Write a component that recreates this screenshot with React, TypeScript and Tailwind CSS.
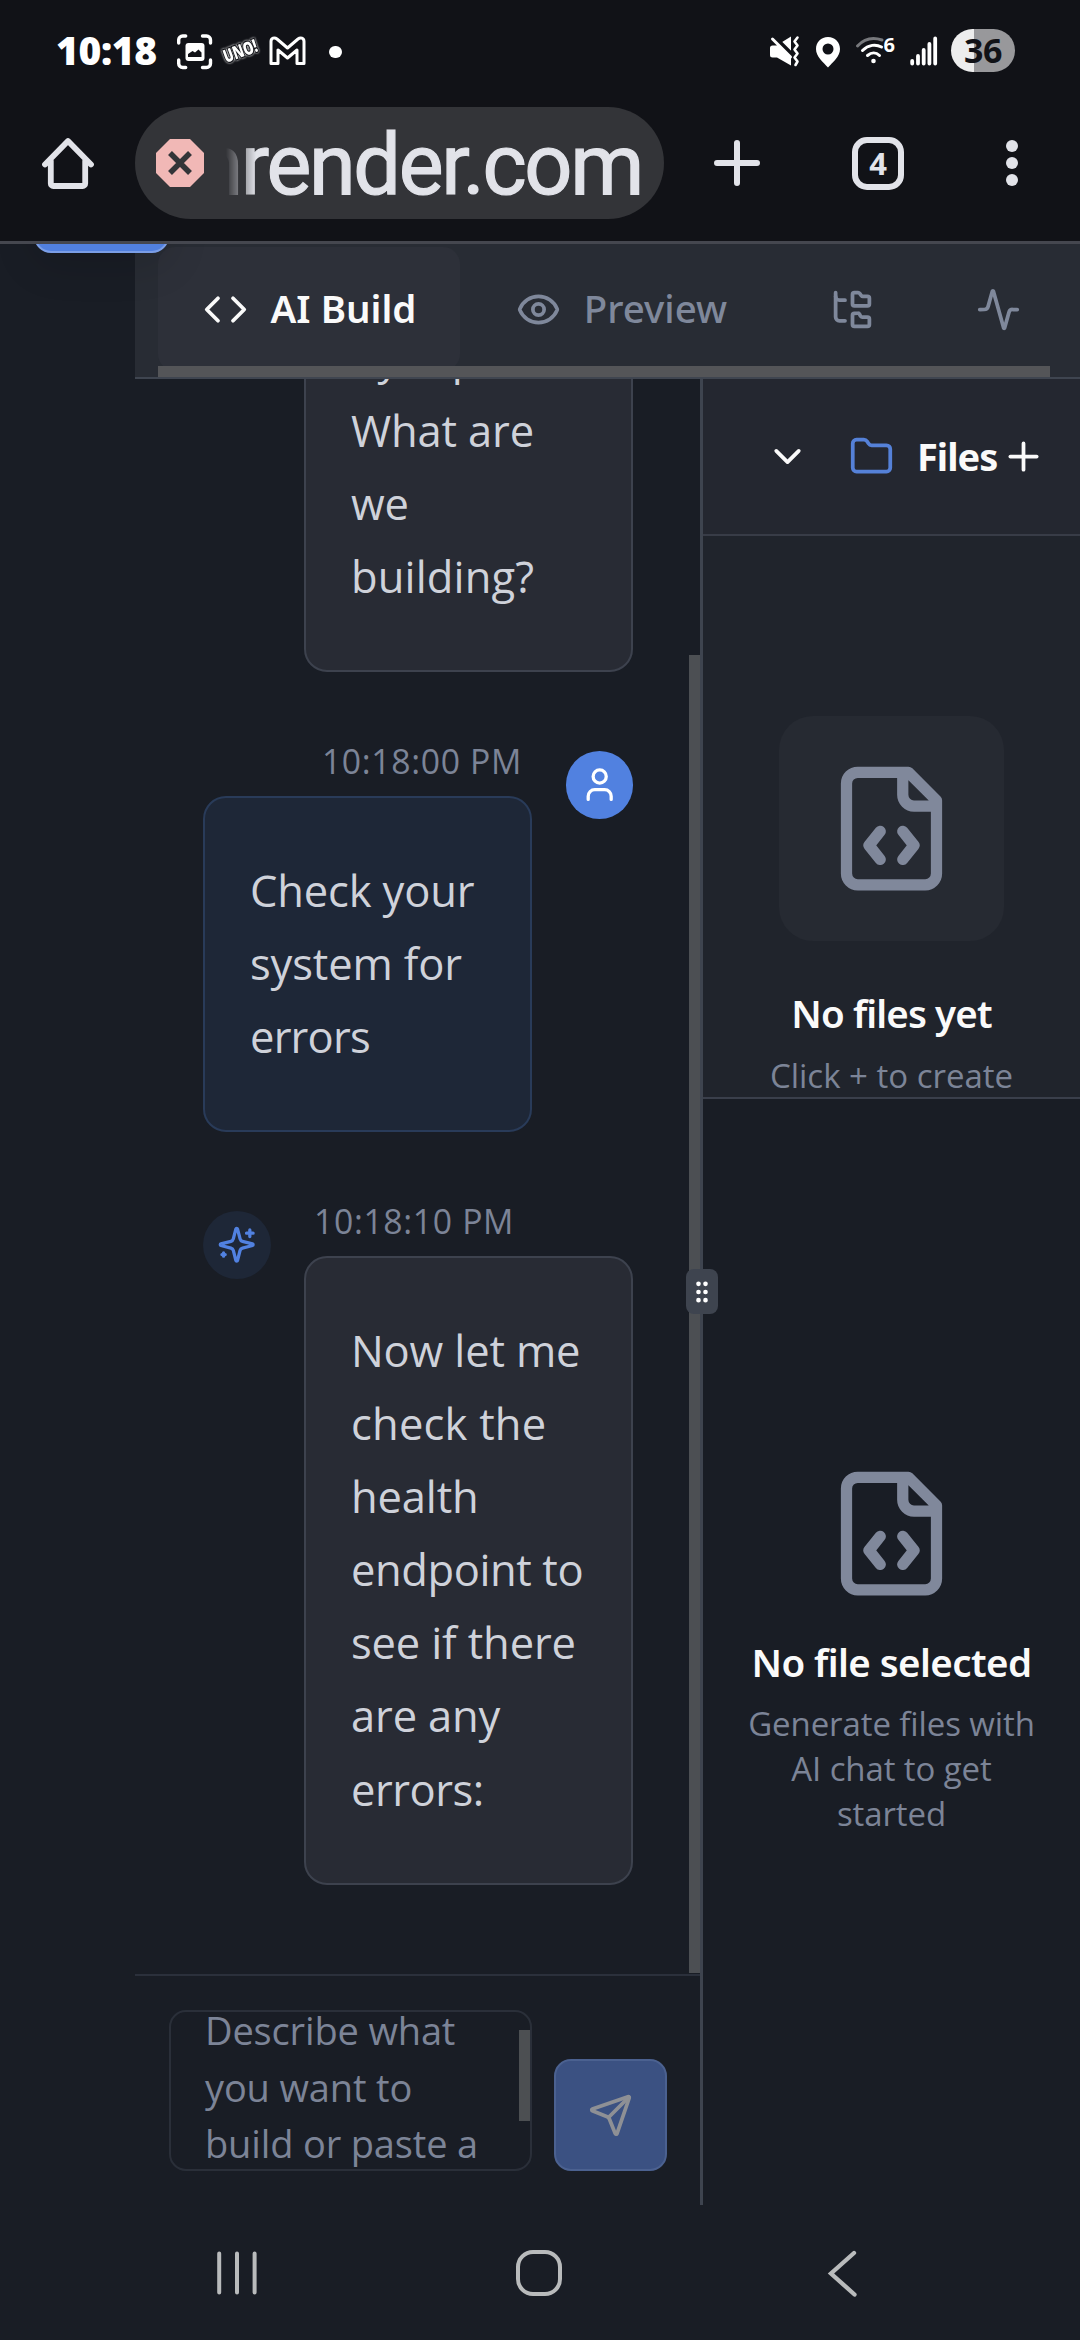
import type { ReactNode } from "react";
import { Activity, ChevronDown, Code, Eye, Folder, FolderTree, GripVertical, Plus, Send, User } from "lucide-react";

function StatusBar() {
  return (
    <div className="flex h-[100px] shrink-0 items-center pl-[56px] pr-[65px] text-white">
      <span className="w-[106px] whitespace-nowrap font-['Noto_Sans',sans-serif] text-[39px] font-black leading-[50px] tracking-[-0.4px]">10:18</span>
      <div className="ml-[14px] flex items-center">
        <svg className="mt-[3px] h-[37px] w-[37px]" viewBox="0 0 37 37" fill="none">
          <g stroke="#fff" strokeWidth="3.4" strokeLinecap="round">
            <path d="M2.7 10V7a4 4 0 0 1 4-4h3M26.5 3h4a4 4 0 0 1 4 4v3M34.500 27v3.500a4 4 0 0 1-4 4h-4M9.700 34.500h-3a4 4 0 0 1-4-4V27" />
          </g>
          <rect x="9.500" y="10" width="19" height="18" rx="3" fill="#fff" />
          <path d="M12 24v-3l4.500-3 2.500 1.500 3.500-3 3 3V24z" fill="#111217" />
        </svg>
        <svg className="ml-[9px] h-[34px] w-[38px] overflow-visible drop-shadow-[0_0_1px_#fff]" viewBox="0 0 38 34">
          <text x="4" y="30" transform="rotate(-20 4 30)" textLength="35" lengthAdjust="spacingAndGlyphs" className="font-['Open_Sans',sans-serif] text-[18px] font-extrabold" fill="#fff" stroke="#111217" strokeWidth="2.500" paintOrder="stroke">UNO!</text>
        </svg>
        <svg className="ml-[9px] mt-[2px] h-[30px] w-[37px]" viewBox="0 0 37 30" fill="none" stroke="#fff" strokeWidth="3" strokeLinejoin="round">
          <path d="M2 27V5.500C2 2 5.500 1 8 3l10.500 9L29 3c2.500-2 6-1 6 2.500V27.500h-7V14l-9.500 8L9 14v13.500H2z" />
        </svg>
        <span className="ml-[23px] mt-[4px] size-[12.500px] rounded-full bg-white" />
      </div>
      <div className="ml-auto flex items-center">
        <svg className="mt-[2px] h-[32px] w-[32px]" viewBox="0 0 32 32" fill="none">
          <path d="M3.500 10.500h4L22 1.500v29L8 22.500H3.500A2.500 2.500 0 0 1 1 20v-7a2.500 2.500 0 0 1 2.500-2.500z" fill="#fff" />
          <path d="M3.500 0L26 22.500" stroke="#111217" strokeWidth="4" />
          <path d="M3.500 4L21.500 22" stroke="#fff" strokeWidth="3" strokeLinecap="round" />
          <path d="M28.500 2.500l-3 4 3 4-3 4 3 4-3 4 3 4-2 3.500" stroke="#fff" strokeWidth="2.600" strokeLinecap="round" strokeLinejoin="round" />
        </svg>
        <svg className="ml-[14px] mt-[3px] h-[32px] w-[26px]" viewBox="0 0 26 32">
          <path fillRule="evenodd" fill="#fff" d="M13 1C6 1 1 6 1 13c0 7.500 7 13 12 18.500C18 26 25 20.500 25 13 25 6 20 1 13 1zm0 6.500a5.500 5.500 0 1 1 0 11 5.500 5.500 0 0 1 0-11z" />
        </svg>
        <svg className="ml-[15px] h-[30px] w-[38px] overflow-visible" viewBox="0 0 38 30" fill="none" strokeLinecap="round" strokeWidth="3">
          <path d="M1.500 11C8 4 17 2 26 5" stroke="#77787c" />
          <path d="M6.500 15.500C12.500 9.500 20 9 25.500 12" stroke="#fff" />
          <path d="M11.500 20.500c4-3.500 8.500-3.500 12 0" stroke="#fff" />
          <circle cx="17.500" cy="26" r="2.300" fill="#fff" />
          <text x="27.500" y="16.500" className="font-['Noto_Sans',sans-serif] text-[20px] font-bold" fill="#fff">6</text>
        </svg>
        <svg className="ml-[16px] mt-[3px] h-[31px] w-[28px]" viewBox="0 0 28 31" stroke="#fff" strokeWidth="3.800" strokeLinecap="round">
          <path d="M2.200 25v2.500M8 20v7.500M13.700 14v13.500M19.400 8v19.500M25.200 2.500v25" />
        </svg>
        <span className="ml-[13px] flex h-[43px] w-[64px] items-center justify-center rounded-full bg-linear-to-r from-[#ededed] from-36% to-[#98989b] to-36% font-['Noto_Sans',sans-serif] text-[34px] font-bold leading-[43px] tracking-[-0.5px] text-[#111217]">36</span>
      </div>
    </div>
  );
}

function BrowserToolbar() {
  return (
    <div className="flex h-[126px] shrink-0 items-center">
      <svg className="ml-[42px] h-[54px] w-[52px]" viewBox="0 0 52 54" fill="none" stroke="#e2e3e9" strokeWidth="5.800" strokeLinejoin="round" strokeLinecap="round">
        <path d="M3 28.500L26 5l23 23.500M8.800 25v22.500a2.500 2.500 0 0 0 2.500 2.500h29.400a2.500 2.500 0 0 0 2.500-2.500V25" />
      </svg>
      <div className="ml-[41px] flex h-[112px] w-[529px] items-center rounded-full bg-[#333438]">
        <svg className="ml-[21px] size-[48px]" viewBox="0 0 48 48">
          <path d="M14 0h20l14 14v20L34 48H14L0 34V14z" fill="#f1b8b6" />
          <path d="M14 14l20 20M34 14L14 34" stroke="#333438" strokeWidth="5.500" />
        </svg>
        <div className="ml-[22px] flex h-[112px] w-[416px] justify-end overflow-hidden [mask-image:linear-gradient(90deg,transparent,black_30px)]">
          <span className="mt-[3px] whitespace-nowrap font-['Roboto',sans-serif] text-[84.500px] font-normal leading-[112px] tracking-[-2.300px] text-[#e2e3e9] [-webkit-text-stroke:1.2px_#e2e3e9]">nrender.com</span>
        </div>
      </div>
      <svg className="ml-[50px] size-[46px]" viewBox="0 0 46 46" stroke="#e2e3e9" strokeWidth="6" strokeLinecap="round">
        <path d="M23 3v40M3 23h40" />
      </svg>
      <span className="ml-[92px] flex h-[53px] w-[52px] items-center justify-center rounded-[15px] border-6 border-[#e2e3e9] font-['Noto_Sans',sans-serif] text-[31px] font-bold leading-none text-[#e2e3e9]">4</span>
      <div className="ml-[102px] flex flex-col gap-[5px]">
        <span className="size-[12px] rounded-full bg-[#e2e3e9]" />
        <span className="size-[12px] rounded-full bg-[#e2e3e9]" />
        <span className="size-[12px] rounded-full bg-[#e2e3e9]" />
      </div>
    </div>
  );
}

function TabBar() {
  return (
    <div className="relative h-[135px] shrink-0 overflow-hidden border-b-2 border-[#3f4550] bg-[#282c34] pl-[23px] pt-[3px]">
      <div className="flex h-[124px] gap-[11.250px] font-['Noto_Sans',sans-serif] text-[38.500px] font-[560]">
        <div className="flex w-[302px] shrink-0 items-center gap-[22.500px] rounded-[17px] bg-[#2d3039] px-[45px] text-[#fafafa]">
          <Code size={45} className="shrink-0" />
          <span className="whitespace-nowrap">AI Build</span>
        </div>
        <div className="flex w-[302px] shrink-0 items-center gap-[22.500px] px-[45px] text-[#7f889b]">
          <Eye size={45} className="shrink-0" />
          <span className="whitespace-nowrap font-medium">Preview</span>
        </div>
        <div className="flex shrink-0 items-center px-[45px] text-[#7f889b]">
          <FolderTree size={45} />
        </div>
        <div className="flex shrink-0 items-center px-[45px] text-[#7f889b]">
          <Activity size={45} />
        </div>
      </div>
      <div className="absolute bottom-0 left-[23px] h-[11px] w-[892px] bg-[#545558]" />
    </div>
  );
}

function Bubble({ tone, children }: { tone: "user" | "ai"; children: ReactNode }) {
  const color = tone === "user" ? "border-[#293b59] bg-[#1e2737]" : "border-[#3d424e] bg-[#282b34]";
  return (
    <div className={`w-[329px] rounded-[23px] border-2 px-[45px] pb-[57px] pt-[55.600px] text-[43.500px] leading-[73.125px] tracking-[-0.150px] whitespace-nowrap text-[#cfd2da] ${color}`}>
      {children}
    </div>
  );
}

function SparklesIcon() {
  return (
    <svg className="size-[39.400px]" viewBox="0 0 24 24" fill="none" stroke="#5181e0" strokeWidth="2" strokeLinecap="round" strokeLinejoin="round">
      <path d="M9.937 15.500A2 2 0 0 0 8.500 14.063l-6.135-1.582a.5.5 0 0 1 0-.962L8.500 9.936A2 2 0 0 0 9.937 8.500l1.582-6.135a.5.5 0 0 1 .963 0L14.063 8.500A2 2 0 0 0 15.500 9.937l6.135 1.581a.5.5 0 0 1 0 .964L15.500 14.063a2 2 0 0 0-1.437 1.437l-1.582 6.135a.5.5 0 0 1-.963 0z" />
      <path d="M20 3v4M22 5h-4M4 17v2M5 18H3" />
    </svg>
  );
}

function Chat() {
  return (
    <div className="relative flex w-[565px] shrink-0 flex-col">
      <div className="relative flex h-[1595px] shrink-0 flex-col justify-end gap-[66px] overflow-hidden pb-[89.300px] pl-[68px] pr-[67px]">
        <div className="flex shrink-0 justify-end">
          <Bubble tone="ai">
            <div>by top…</div>
            <div>What are</div>
            <div>we</div>
            <div className="tracking-[0.150px]">building?</div>
          </Bubble>
        </div>
        <div className="flex shrink-0 gap-[33.500px]">
          <div className="flex flex-col gap-[12px]">
            <span className="pr-[10px] pt-px text-right text-[33.750px] leading-[45px] tracking-[0.650px] text-[#7c8497]">10:18:00 PM</span>
            <Bubble tone="user">
              <div>Check your</div>
              <div>system for</div>
              <div className="tracking-[-0.800px]">errors</div>
            </Bubble>
          </div>
          <span className="mt-[13px] flex size-[67.500px] items-center justify-center rounded-full bg-[#5181e0] text-white">
            <User size={39.4} />
          </span>
        </div>
        <div className="flex shrink-0 gap-[33.500px]">
          <span className="mt-[13px] flex size-[67.500px] items-center justify-center rounded-full bg-[#1e2737]">
            <SparklesIcon />
          </span>
          <div className="flex flex-col gap-[12px]">
            <span className="pl-[10px] pt-px text-[33.750px] leading-[45px] tracking-[0.650px] text-[#7c8497]">10:18:10 PM</span>
            <Bubble tone="ai">
              <div>Now let me</div>
              <div className="tracking-[0.200px]">check the</div>
              <div>health</div>
              <div className="tracking-[-0.400px]">endpoint to</div>
              <div>see if there</div>
              <div>are any</div>
              <div className="tracking-[-0.500px]">errors:</div>
            </Bubble>
          </div>
        </div>
        <div className="absolute bottom-px right-0 h-[1318px] w-[11px] bg-[#4c4f53]" />
      </div>
      <div className="flex h-[231px] shrink-0 items-end gap-[22px] border-t-2 border-[#2b303b] pb-[34px] pl-[34px] pr-[33px]">
        <div className="relative h-[161px] w-[363px] overflow-hidden rounded-[17px] border-2 border-[#2a2f39] pl-[34px] text-[38px] leading-[56.500px] tracking-[-0.150px] text-[#7c8497]">
          <div className="-mt-[10px] whitespace-nowrap">
            <div>Describe what</div>
            <div>you want to</div>
            <div>build or paste a</div>
          </div>
          <div className="absolute right-0 top-[18px] h-[91px] w-[11px] bg-[#4c4f52]" />
        </div>
        <div className="flex h-[112px] w-[113px] items-center justify-center rounded-[17px] border-2 border-[#4b6190] bg-[#3b5182] text-[#8e9095]">
          <Send size={45} />
        </div>
      </div>
    </div>
  );
}

function FileCodeIcon() {
  return (
    <svg className="size-[135px]" viewBox="0 0 24 24" fill="none" stroke="#80889b" strokeWidth="2" strokeLinecap="round" strokeLinejoin="round">
      <path d="M10 12.500 8 15l2 2.500M14 12.500l2 2.500-2 2.500M14 2v4a2 2 0 0 0 2 2h4M15 2H6a2 2 0 0 0-2 2v16a2 2 0 0 0 2 2h12a2 2 0 0 0 2-2V7z" />
    </svg>
  );
}

function FilesPanel() {
  return (
    <div className="flex w-[377px] shrink-0 flex-col">
      <div className="flex h-[157px] shrink-0 items-center border-b-2 border-[#383c47] bg-[#242730] pl-[62px] text-[#fafafa]">
        <ChevronDown size={45} className="shrink-0" />
        <Folder size={45} className="ml-[39px] shrink-0 text-[#5581d8]" />
        <span className="ml-[23px] w-[82px] shrink-0 font-['Noto_Sans',sans-serif] text-[38px] font-bold tracking-[-1px]">Files</span>
        <Plus size={45} className="ml-[2px] shrink-0" />
      </div>
      <div className="flex h-[563px] shrink-0 flex-col items-center overflow-hidden border-b-2 border-[#3a3f4b] bg-[#20242c] pt-[180px] text-center">
        <div className="flex size-[225px] shrink-0 items-center justify-center rounded-[34px] bg-[#262a32]">
          <FileCodeIcon />
        </div>
        <div className="mt-[44px] font-['Noto_Sans',sans-serif] text-[38.500px] font-[560] leading-[56px] tracking-[-0.900px] text-[#fafafa]">No files yet</div>
        <div className="mt-[12px] text-[33px] leading-[45px] text-[#7c8497]">Click + to create</div>
      </div>
      <div className="flex grow flex-col items-center pt-[367px] text-center">
        <FileCodeIcon />
        <div className="mt-[33px] font-['Noto_Sans',sans-serif] text-[38.500px] font-[560] leading-[56px] tracking-[-0.600px] text-[#fafafa]">No file selected</div>
        <div className="mt-[11px] text-[33px] leading-[45px] tracking-[-0.100px] text-[#7c8497]">
          Generate files with
          <br />
          AI chat to get
          <br />
          started
        </div>
      </div>
    </div>
  );
}

function NavBar() {
  return (
    <div className="flex h-[135px] shrink-0 items-center pt-px text-[#b9bbbc]">
      <svg className="ml-[216px] h-[44px] w-[42px]" viewBox="0 0 42 44" stroke="currentColor" strokeWidth="4" strokeLinecap="round">
        <path d="M3.200 2.500v39M21 2.500v39M38.600 2.500v39" />
      </svg>
      <span className="ml-[258px] size-[46px] rounded-[17px] border-[4.500px] border-current" />
      <svg className="ml-[265px] h-[47px] w-[31px]" viewBox="0 0 31 47" fill="none" stroke="currentColor" strokeWidth="4.300" strokeLinecap="round">
        <path d="M27 3L4 23.500 27.500 44.500" />
      </svg>
    </div>
  );
}

export default function App() {
  return (
    <div className="flex h-[2340px] w-[1080px] flex-col overflow-hidden bg-[#191d25] font-['Open_Sans',sans-serif]">
      <div className="flex h-[244px] shrink-0 flex-col border-b-3 border-[#45474f] bg-[#111217]">
        <StatusBar />
        <BrowserToolbar />
      </div>
      <div className="relative flex h-[1961px] shrink-0 overflow-hidden">
        <aside className="w-[135px] shrink-0" />
        <main className="flex w-[945px] shrink-0 flex-col">
          <TabBar />
          <div className="flex h-[1826px]">
            <Chat />
            <div className="relative w-[3px] shrink-0 bg-[#3e444f]">
              <span className="absolute -left-[14px] top-[890px] flex h-[45px] w-[32px] items-center justify-center rounded-[8px] bg-[#3e444f] text-white">
                <GripVertical size={28} />
              </span>
            </div>
            <FilesPanel />
          </div>
        </main>
        <div className="absolute left-[34px] top-[-60px] h-[69px] w-[135px] rounded-[17px] border-2 border-[#7b9ee6] bg-[#5180df] shadow-[0_11px_42px_rgba(0,0,0,0.13)]" />
      </div>
      <NavBar />
    </div>
  );
}
